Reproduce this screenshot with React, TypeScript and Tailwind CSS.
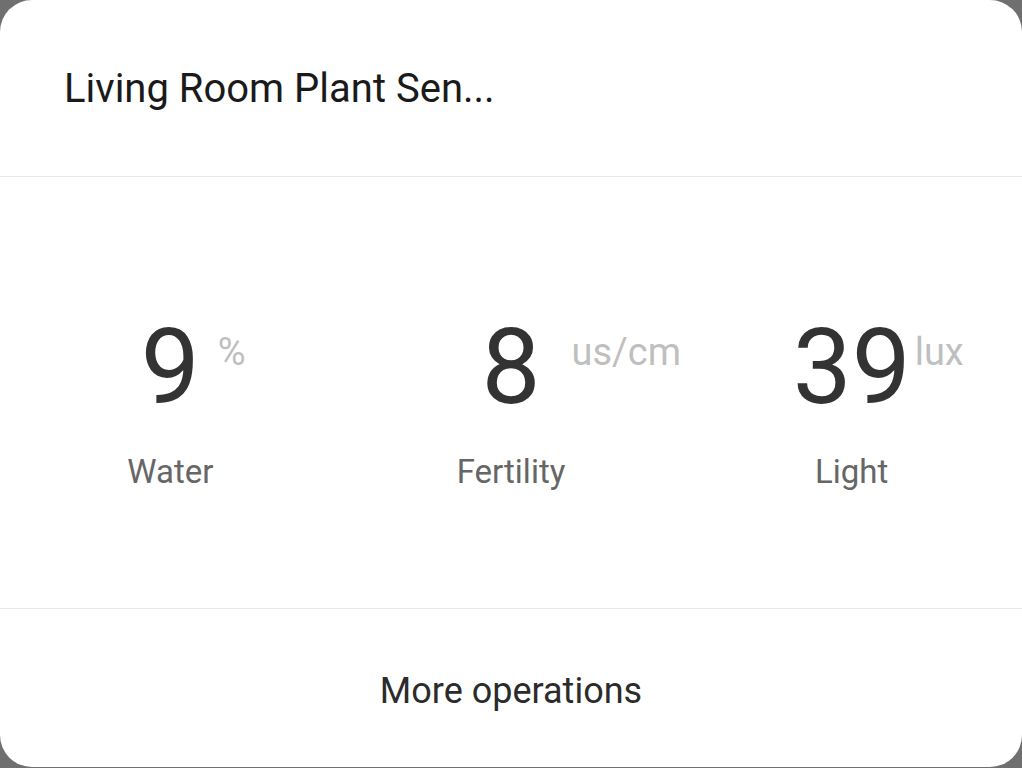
import React from "react";

const items = [
  { value: "9", unit: "%", label: "Water", unitCls: "left-[calc(100%+18px)]" },
  { value: "8", unit: "us/cm", label: "Fertility", unitCls: "left-[calc(100%+31px)]" },
  { value: "39", unit: "lux", label: "Light", unitCls: "left-[calc(100%+4px)]" },
];

export default function App() {
  return (
    <div className="w-[1022px] h-[768px] bg-[#6f6f6f] overflow-hidden" style={{ fontFamily: "Roboto, 'Noto Sans', sans-serif" }}>
      <div className="h-[767px] bg-white rounded-[32px] flex flex-col">
        <div className="h-[177px] pt-[69px] px-16 border-b border-[#e9e9e9]">
          <div className="text-[40px] leading-none text-[#1a1a1a] whitespace-nowrap">Living Room Plant Sen...</div>
        </div>
        <div className="h-[432px] grid grid-cols-3 border-b border-[#e9e9e9]">
          {items.map((it) => (
            <div key={it.label} className="flex flex-col items-center pt-[138px]">
              <div className="relative leading-none">
                <span className="block text-[105px] text-[#333333] leading-none">{it.value}</span>
                <span className={"absolute top-[18px] text-[38px] text-[#bfbfbf] leading-none whitespace-nowrap " + it.unitCls}>{it.unit}</span>
              </div>
              <div className="mt-[35px] text-[33px] text-[#666666] leading-none">{it.label}</div>
            </div>
          ))}
        </div>
        <div className="flex-1 pt-[64px] flex justify-center">
          <span className="text-[36px] leading-none text-[#2b2b2b] h-fit">More operations</span>
        </div>
      </div>
    </div>
  );
}
